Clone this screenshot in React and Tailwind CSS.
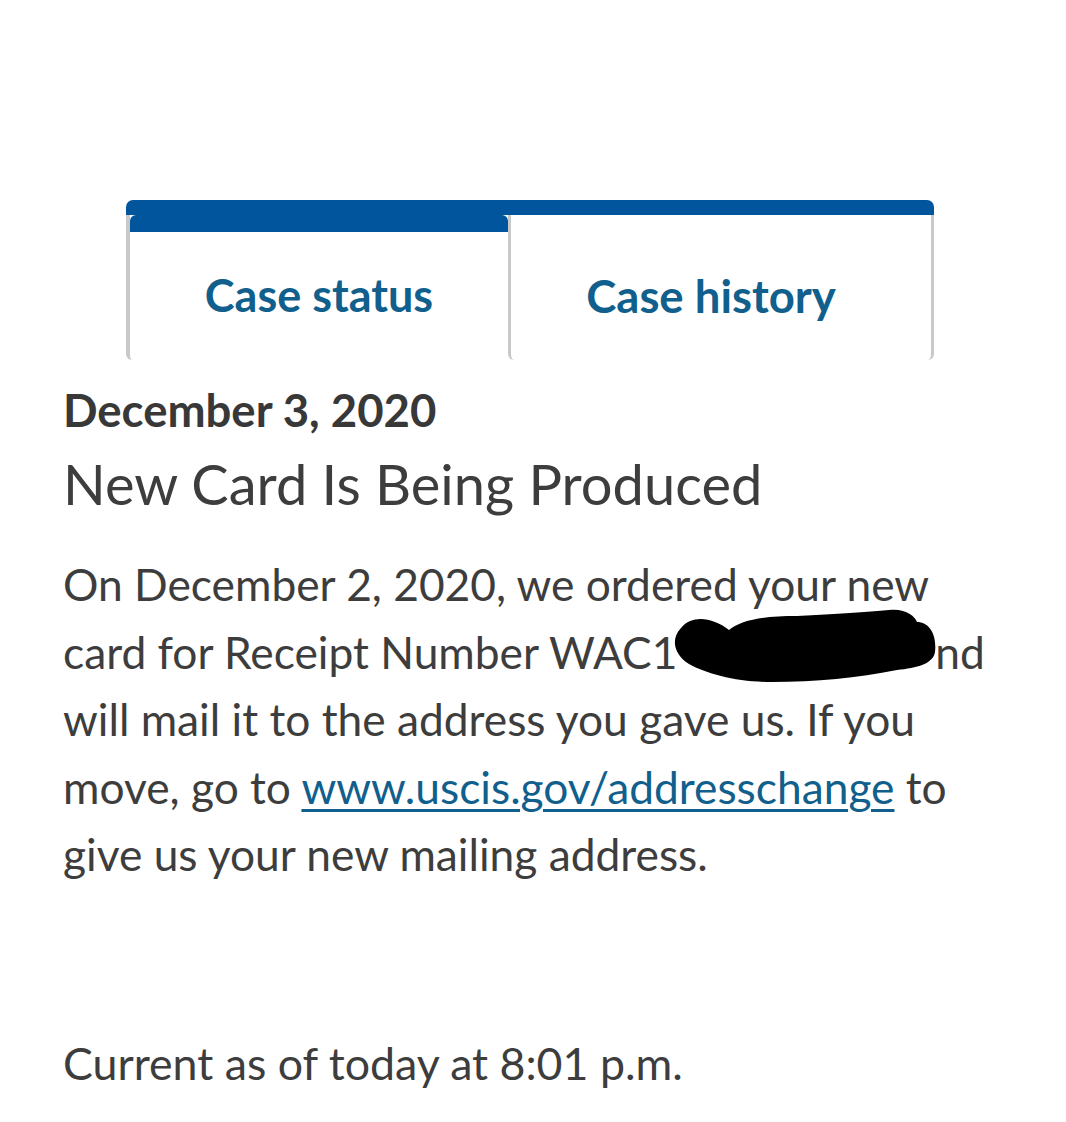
const Redaction = () => (
  <span className="relative inline-block w-[258px] h-[1em] align-baseline">
    <svg
      className="absolute left-[-10px] top-[-16px]"
      width="270"
      height="78"
      viewBox="0 0 270 78"
    >
      <path
        d="M14 20 C 26 6, 46 10, 62 22 C 74 12, 96 8, 130 8 C 170 6, 200 4, 222 2 C 238 0, 248 8, 250 14 C 262 14, 270 26, 268 44 C 266 56, 250 60, 230 62 C 190 70, 150 74, 104 74 C 70 74, 40 66, 22 56 C 6 46, 4 30, 14 20 Z"
        fill="#000"
      />
    </svg>
  </span>
);

export default function App() {
  return (
    <div className="min-h-screen bg-white text-[#3d3d3d] [font-family:Lato,'Liberation_Sans',sans-serif]">
      <div className="pt-[200px] px-[63px]">
        {/* TABS */}
        <div className="ml-[63px] w-[808px] flex border-t-[15px] border-[#00559d] rounded-t-[7px]">
          <div className="w-[382px] h-[145px] border-l-[4px] border-[#c9c9c9] rounded-bl-[6px] flex flex-col">
            <div className="h-[17px] bg-[#00559d] rounded-t-[6px]" />
            <div className="flex-1 flex items-center justify-center">
              <span className="text-[45px] font-bold text-[#115f8d]">Case status</span>
            </div>
          </div>
          <div className="flex-1 h-[145px] border-x-[3px] border-[#c9c9c9] rounded-b-[6px] flex items-center justify-center pt-[17px]">
            <span className="text-[45.5px] font-bold text-[#115f8d] mr-[20px]">Case history</span>
          </div>
        </div>

        {/* STATUS */}
        <div className="mt-[23px]">
          <div className="text-[45.5px] font-bold leading-[54px] text-[#383838]">December 3, 2020</div>
          <h2 className="mt-[11px] text-[56px] leading-[72px] font-normal">New Card Is Being Produced</h2>
          <p className="mt-[30px] text-[44.3px] leading-[67.5px]">
            On December 2, 2020, we ordered your new
            <br />
            card for Receipt Number WAC1<Redaction />nd
            <br />
            will mail it to the address you gave us. If you
            <br />
            move, go to{" "}
            <a href="#" className="text-[#115f8d] underline underline-offset-[5px] decoration-[3px]">
              www.uscis.gov/addresschange
            </a>{" "}
            to
            <br />
            give us your new mailing address.
          </p>
        </div>

        <div className="mt-[145px] text-[44.7px] leading-[60px]">Current as of today at 8:01 p.m.</div>
      </div>
    </div>
  );
}
